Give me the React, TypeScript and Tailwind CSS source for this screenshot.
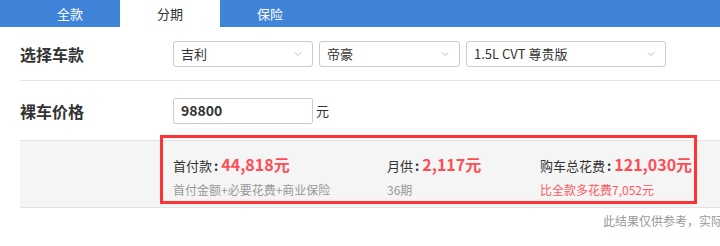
import { ChevronDown } from 'lucide-react';

const font = { fontFamily: '"Noto Sans CJK SC", "Liberation Sans", sans-serif' };

function Select({ value, width }: { value: string; width: string }) {
  return (
    <div
      className={`${width} h-[26px] border border-[#ccc] rounded-[3px] bg-white flex items-center justify-between pl-[7px] pr-[8px] text-[13px] text-[#333]`}
    >
      <span>{value}</span>
      <ChevronDown size={12} strokeWidth={1.5} className="text-[#aaa]" />
    </div>
  );
}

function Stat({ label, value, note, noteRed }: { label: string; value: string; note: string; noteRed?: boolean }) {
  return (
    <div className="flex flex-col">
      <div className="flex items-baseline h-[24px]">
        <span className="text-[13px] text-[#333]">{label}</span>
        <span className="text-[13px] text-[#333] font-bold ml-[2px] mr-[3px]">:</span>
        <span className="text-[16px] font-bold text-[#ff4d55] leading-none">{value}</span>
      </div>
      <div className={`text-[12px] mt-[1px] ${noteRed ? 'text-[#ff5a5f]' : 'text-[#999]'}`}>{note}</div>
    </div>
  );
}

export default function App() {
  return (
    <div className="w-[720px] h-[246px] overflow-hidden bg-white" style={font}>
      {/* tabs */}
      <div className="h-[27px] bg-[#3f84d9] flex pl-[20px]">
        <div className="w-[100px] text-center text-[13px] leading-[27px] text-white">全款</div>
        <div className="w-[100px] text-center text-[13px] leading-[27px] text-[#333] bg-white">分期</div>
        <div className="w-[100px] text-center text-[13px] leading-[27px] text-white">保险</div>
      </div>

      <div className="ml-[20px] w-[760px] relative">
        <div className="h-[54px] border-b border-[#e3e3e3] flex items-center">
          <div className="w-[153px] text-[16px] font-bold text-[#333]">选择车款</div>
          <div className="flex gap-[6px]">
            <Select value="吉利" width="w-[140px]" />
            <Select value="帝豪" width="w-[141px]" />
            <Select value="1.5L CVT 尊贵版" width="w-[200px]" />
          </div>
        </div>

        <div className="h-[60px] border-b border-[#e3e3e3] flex items-center">
          <div className="w-[153px] text-[16px] font-bold text-[#333]">裸车价格</div>
          <div className="w-[140px] h-[26px] border border-[#ccc] rounded-[2px] flex items-center pl-[7px] text-[14px] font-bold text-[#333]">
            98800
          </div>
          <span className="ml-[3px] text-[13px] text-[#333]">元</span>
        </div>

        <div className="h-[67px] bg-[#f5f5f5] border-b border-[#e3e3e3] flex items-center pl-[153px] pt-[6px]">
          <div className="w-[214px]">
            <Stat label="首付款" value="44,818元" note="首付金额+必要花费+商业保险" />
          </div>
          <div className="w-[153px]">
            <Stat label="月供" value="2,117元" note="36期" />
          </div>
          <Stat label="购车总花费" value="121,030元" note="比全款多花费7,052元" noteRed />
        </div>

        {/* highlight annotation */}
        <div className="absolute left-[140px] top-[108px] w-[537px] h-[69px] border-[3px] border-[#f33]" />

        <div className="h-[26px] flex items-center pl-[583px] text-[12px] text-[#999] whitespace-nowrap">
          此结果仅供参考，实际情况以当地4S店为准
        </div>
        <div className="mt-[7px] text-[16px] font-bold text-[#333]">贷款期限</div>
      </div>
    </div>
  );
}
